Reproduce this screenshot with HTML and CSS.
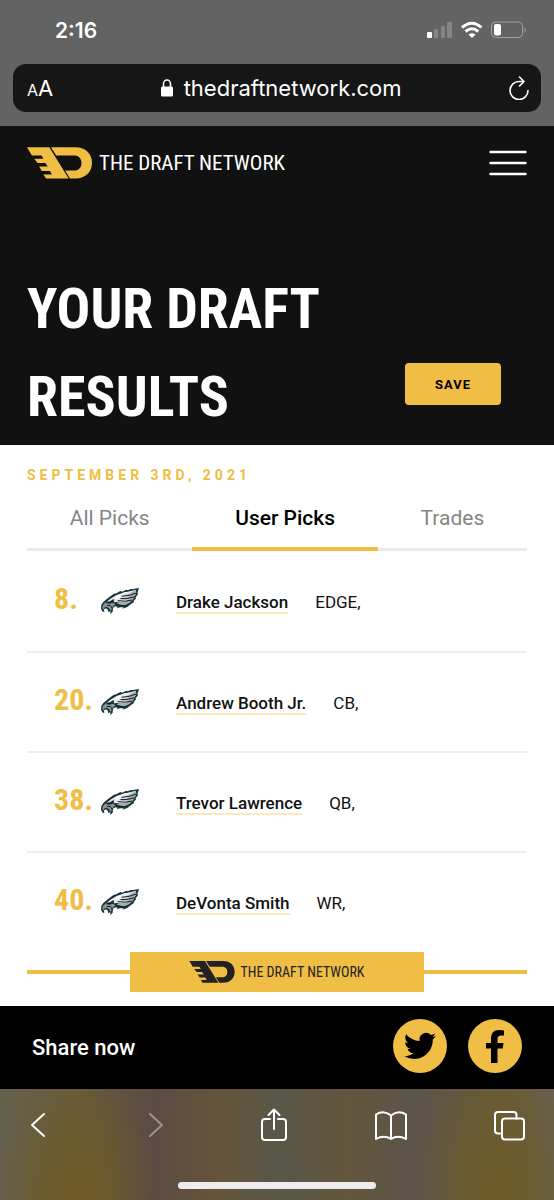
FILE: index.html
```html
<!DOCTYPE html>
<html lang="en">
<head>
<meta charset="utf-8">
<meta name="viewport" content="width=device-width, initial-scale=1">
<title>Your Draft Results</title>
<link rel="stylesheet" href="styles.css">
</head>
<body>
<svg class="defs" aria-hidden="true">
  <symbol id="mark" viewBox="0 0 198 96">
    <path d="M0 0H68L127 95H58L50 83H76L70 72H45L37 59H63L56 48H32L22 35H50L44 25H15Z"/>
    <path d="M73 0H148C179 0 198 20 198 47S179 95 148 95H131L116 71H145C158 71 166 61 166 48S158 25 145 25H89Z"/>
  </symbol>
  <symbol id="eagle" viewBox="0 0 114 78">
    <path fill="#12343b" d="M114 0 92 4 91 2 80 7 76 5 63 11 58 9 46 16 39 17 24 28 13 37 7 42 1 51 0 62 4 70 10 73 9 64 15 61 21 66 21 72 28 70 28 78 35 71 36 59 43 55 50 56 48 61 57 58 68 58 64 62 79 57 86 51 99 42 98 39 106 30 103 29 112 17 109 16Z"/>
    <path fill="#e3e4e5" d="M105 5 80 11 48 20 30 31 17 41 28 40 38 33 39 43 50 42 66 46 79 43 93 35 100 26 105 16Z"/>
    <path fill="#a7acaf" d="M105 6 84 17 70 24 92 21 76 29 62 36 86 34 70 42 55 43 44 46 56 50 70 52 84 46 95 37 100 27 106 16Z"/>
    <path fill="#8c9295" d="M14 43 6 51 4 61 7 66 9 59 16 56 24 60 29 70 34 58 43 49 36 44 25 47Z"/>
    <path fill="none" stroke="#111b1e" stroke-width="3" d="M106 15Q86 24 62 25M101 26Q82 33 58 32M94 36Q74 42 50 38M36 35Q31 45 17 45M18 53Q30 49 33 61M43 46Q56 54 70 53"/>
    <path fill="#fff" d="M70 13 45 24 36 31 48 28 42 36 56 29 62 19 88 11Z"/>
  </symbol>
</svg>

<div class="browser-top">
  <div class="status">
    <span>2:16</span>
    <svg class="signals" viewBox="0 0 100 18" aria-hidden="true">
      <rect x="0" y="11" width="5" height="6" rx="1" fill="#fff"/>
      <g fill="#858585"><rect x="7" y="8" width="4" height="9" rx="1"/><rect x="14" y="5" width="4" height="12" rx="1"/><rect x="20" y="1" width="5" height="16" rx="1"/></g>
      <g fill="none" stroke="#fff" stroke-width="3"><path d="M35 6.500Q45-2 54.500 6.500"/><path d="M38.500 10.500Q45 5 51.300 10.500"/></g>
      <path fill="#fff" d="M41.500 13.500Q45 10.800 48.500 13.500L45 17Z"/>
      <rect x="64.500" y="1" width="31" height="15.500" rx="4" fill="none" stroke="#a0a0a0"/>
      <rect x="67" y="3" width="7" height="11.500" rx="2" fill="#fff"/>
      <path d="M97.500 6Q100 9 97.500 12Z" fill="#a0a0a0"/>
    </svg>
  </div>
  <div class="address">
    <button class="plain reader" aria-label="Page settings"><small>A</small>A</button>
    <span class="site">
      <svg class="lock" viewBox="0 0 12 18" aria-hidden="true"><rect y="7.500" width="12" height="10" rx="1.500" fill="#fff"/><path d="M2.500 9V5a3.500 4 0 0 1 7 0V9" fill="none" stroke="#fff" stroke-width="1.600"/></svg>
      thedraftnetwork.com
    </span>
    <button class="plain" aria-label="Reload"><svg class="reload" viewBox="0 0 20 24" fill="none" stroke="#fff" stroke-width="1.600" stroke-linecap="round" stroke-linejoin="round" aria-hidden="true"><path d="M19 14.500A9 9 0 1 1 10 5.500H15M10.500 1 15 5.500 10.500 10"/></svg></button>
  </div>
</div>

<header class="hero">
  <div class="brand-row">
    <a class="brand" href="#"><svg class="mark" aria-hidden="true"><use href="#mark"/></svg><span>THE DRAFT NETWORK</span></a>
    <button class="plain" aria-label="Menu"><svg class="menu" viewBox="0 0 38 26" stroke="#fff" stroke-width="2.400" stroke-linecap="round" aria-hidden="true"><path d="M1.500 2H36.500M1.500 13H36.500M1.500 24H36.500"/></svg></button>
  </div>
  <div class="title-row">
    <h1>YOUR DRAFT RESULTS</h1>
    <button class="save">SAVE</button>
  </div>
</header>

<main>
  <p class="date">SEPTEMBER 3RD, 2021</p>
  <nav class="tabs">
    <button>All Picks</button>
    <button class="active" aria-current="true">User Picks</button>
    <button>Trades</button>
  </nav>
  <ol class="picks">
    <li><span class="num">8.</span><svg class="eagle" role="img" aria-label="Philadelphia Eagles"><use href="#eagle"/></svg><a href="#">Drake Jackson</a><span>EDGE,</span></li>
    <li><span class="num">20.</span><svg class="eagle" role="img" aria-label="Philadelphia Eagles"><use href="#eagle"/></svg><a href="#">Andrew Booth Jr.</a><span>CB,</span></li>
    <li><span class="num">38.</span><svg class="eagle" role="img" aria-label="Philadelphia Eagles"><use href="#eagle"/></svg><a href="#">Trevor Lawrence</a><span>QB,</span></li>
    <li><span class="num">40.</span><svg class="eagle" role="img" aria-label="Philadelphia Eagles"><use href="#eagle"/></svg><a href="#">DeVonta Smith</a><span>WR,</span></li>
  </ol>
  <div class="banner">
    <div class="banner-box"><svg class="mark" aria-hidden="true"><use href="#mark"/></svg><span>THE DRAFT NETWORK</span></div>
  </div>
</main>

<footer class="share">
  <span>Share now</span>
  <a class="social" href="#" aria-label="Twitter"><svg class="bird" viewBox="0 0 24 24" aria-hidden="true"><path d="M23.950 4.570a10 10 0 0 1-2.820.770 4.960 4.960 0 0 0 2.160-2.720c-.950.550-2 .950-3.130 1.180a4.920 4.920 0 0 0-8.380 4.480C7.690 8.090 4.070 6.130 1.640 3.160a4.820 4.820 0 0 0-.670 2.480c0 1.710.870 3.210 2.190 4.100a4.900 4.900 0 0 1-2.230-.620v.060a4.920 4.920 0 0 0 3.950 4.830 5 5 0 0 1-2.210.080 4.940 4.940 0 0 0 4.600 3.420A9.870 9.870 0 0 1 0 19.540a13.990 13.990 0 0 0 7.550 2.210c9.050 0 14-7.500 14-13.980 0-.210 0-.420-.020-.630a9.940 9.940 0 0 0 2.420-2.570Z"/></svg></a>
  <a class="social" href="#" aria-label="Facebook"><svg class="face" viewBox="0 0 18 33" aria-hidden="true"><path d="M5 33V18.500H0V13H5V9C5 3 8 0 13 0Q16 0 18 .500V5.500H15Q11.500 5.500 11.500 9V13H17.500L16.700 18.500H11.500V33Z"/></svg></a>
</footer>

<div class="toolbar">
  <div class="tools">
    <button class="plain" aria-label="Back"><svg class="chev" viewBox="0 0 16 26"><path d="M14 2 2 13 14 24"/></svg></button>
    <button class="plain dim" aria-label="Forward"><svg class="chev" viewBox="0 0 16 26"><path d="M2 2 14 13 2 24"/></svg></button>
    <button class="plain" aria-label="Share"><svg class="tool-icon" viewBox="0 0 32 34"><path d="M12 11H7Q4 11 4 14V29Q4 32 7 32H25Q28 32 28 29V14Q28 11 25 11H20M16 21V1.500M10.500 7 16 1.500 21.500 7"/></svg></button>
    <button class="plain" aria-label="Bookmarks"><svg class="tool-icon" viewBox="0 0 32 34"><path d="M16 7.500Q9 1.500 1 6.500V31Q9 26.500 16 31Q23 26.500 31 31V6.500Q23 1.500 16 7.500V31"/></svg></button>
    <button class="plain" aria-label="Tabs"><svg class="tool-icon" viewBox="0 0 32 34"><rect x="9" y="10.500" width="22" height="21" rx="3"/><path d="M9 25.500H5Q2 25.500 2 22.500V7Q2 4 5 4H20.500Q23.500 4 23.500 7V10.500"/></svg></button>
  </div>
  <div class="home"></div>
</div>
</body>
</html>
```
FILE: styles.css
```css
* { box-sizing: border-box; }

body {
  margin: 0;
  min-height: 100vh;
  display: flex;
  flex-direction: column;
  background: #fff;
  color: #111;
  font-family: Roboto, sans-serif;
}

button { font: inherit; cursor: pointer; }
a { color: inherit; text-decoration: none; }
svg { display: block; flex: none; }
.defs { position: absolute; width: 0; height: 0; }

.plain {
  display: flex;
  align-items: center;
  border: 0;
  padding: 0;
  background: none;
  color: #fff;
}

/* Browser chrome */
.browser-top {
  padding: 0 13px 14px;
  background: #636363;
  color: #fff;
  font-family: Inter, sans-serif;
}
.status {
  display: flex;
  justify-content: space-between;
  align-items: center;
  height: 64px;
  padding: 0 14px 4px 42px;
  font-size: 21px;
  font-weight: 600;
}
.signals { width: 100px; height: 18px; }
.address {
  display: flex;
  justify-content: space-between;
  align-items: center;
  height: 48px;
  padding: 0 12px 0 14px;
  border-radius: 13px;
  background: #161616;
}
.reader { align-items: baseline; font-size: 22px; }
.reader small { font-size: 16px; }
.site { display: flex; align-items: center; gap: 11px; font-size: 22px; }
.lock { width: 12px; height: 18px; }
.reload { width: 20px; height: 24px; }

/* Page header */
.hero { padding: 20px 27px 4px; background: #111; color: #fff; }
.brand-row { display: flex; justify-content: space-between; align-items: center; height: 34px; }
.brand {
  display: flex;
  align-items: center;
  gap: 7px;
  font-family: "Liberation Sans Narrow", "Roboto Condensed", sans-serif;
  font-size: 21px;
}
.mark { width: 65px; height: 32px; fill: #f0bd45; }
.menu { width: 38px; height: 26px; }
.title-row {
  display: flex;
  justify-content: space-between;
  align-items: flex-end;
  padding: 85px 26px 0 0;
}
h1 {
  flex: 0 1 320px;
  margin: 0;
  font-family: "Liberation Sans Narrow", "Roboto Condensed", sans-serif;
  font-size: 56px;
  line-height: 88px;
}
.save {
  width: 96px;
  height: 42px;
  margin-bottom: 36px;
  border: 0;
  border-radius: 4px;
  background: #f0bd45;
  color: #000;
  font-size: 13px;
  font-weight: 700;
  letter-spacing: 1px;
}

/* Results */
main { padding: 0 27px 14px; }
.date {
  margin: 0;
  padding-top: 20px;
  color: #f0bd45;
  font-size: 14px;
  font-weight: 700;
  line-height: 20px;
  letter-spacing: 4px;
}
.tabs {
  display: flex;
  align-items: flex-end;
  height: 66px;
  box-shadow: inset 0 -3px #e9e9e9;
}
.tabs button {
  flex: 1 1 auto;
  height: 66px;
  border: 0;
  padding: 0;
  background: none;
  color: #858585;
  font-size: 21px;
}
.tabs .active {
  border-bottom: 4px solid #f0bd45;
  padding-top: 4px;
  color: #000;
  font-weight: 500;
}
.picks { margin: 0; padding: 0 0 1px; list-style: none; }
.picks li {
  display: grid;
  grid-template-columns: 47px 75px auto 1fr;
  align-items: center;
  height: 100px;
  padding-left: 27px;
  font-size: 17px;
}
.picks li + li { border-top: 2px solid #eee; }
.num {
  margin-bottom: 6px;
  color: #f0bd45;
  font-family: "Liberation Sans Narrow", "Roboto Condensed", sans-serif;
  font-size: 30px;
  font-weight: 700;
}
.eagle { width: 38px; height: 26px; }
.picks a {
  margin: 4px 27px 0 0;
  border-bottom: 2px solid #fbe8bb;
  font-weight: 500;
  line-height: 19px;
}
.picks a + span { margin-top: 2px; }
.banner {
  display: flex;
  justify-content: center;
  background: linear-gradient(#f0bd45, #f0bd45) center / 100% 4px no-repeat;
}
.banner-box {
  display: flex;
  align-items: center;
  justify-content: center;
  gap: 5px;
  width: 294px;
  height: 40px;
  background: #f0bd45;
  color: #222;
  font-family: "Liberation Sans Narrow", "Roboto Condensed", sans-serif;
  font-size: 14px;
}
.banner .mark { width: 46px; height: 22px; fill: #222; }

.share {
  display: flex;
  align-items: center;
  gap: 21px;
  height: 83px;
  padding: 0 32px;
  background: #000;
  color: #fff;
  font-size: 22px;
  font-weight: 500;
}
.share span { flex: 1; }
.social {
  display: grid;
  place-items: center;
  width: 54px;
  height: 54px;
  margin-bottom: 3px;
  border-radius: 50%;
  background: #f0bd45;
}
.bird { width: 32px; height: 32px; }
.face { width: 18px; height: 33px; }

.toolbar {
  flex: 1 0 111px;
  display: flex;
  flex-direction: column;
  justify-content: space-between;
  align-items: center;
  padding: 19px 29px 11px 22px;
  background:
    radial-gradient(ellipse 80px 120px at 14% 100%, #705a24, transparent),
    radial-gradient(ellipse 80px 120px at 90% 90%, #6e5c28, transparent),
    linear-gradient(90deg, #64604c, #685c38 14%, #5b4b43 28%, #655539 40%, #585749 50%, #63563c 63%, #5c554a 75%, #685a35 90%, #67604a);
}
.tools { display: flex; justify-content: space-between; align-items: center; width: 100%; }
.tools button { width: 32px; justify-content: center; }
.tools svg { fill: none; stroke: #fff; stroke-width: 2; stroke-linecap: round; stroke-linejoin: round; }
.chev { width: 16px; height: 26px; }
.tool-icon { width: 32px; height: 34px; }
.dim { opacity: .4; }
.home { width: 198px; height: 7px; margin-left: 7px; border-radius: 4px; background: #eeecee; }
```
